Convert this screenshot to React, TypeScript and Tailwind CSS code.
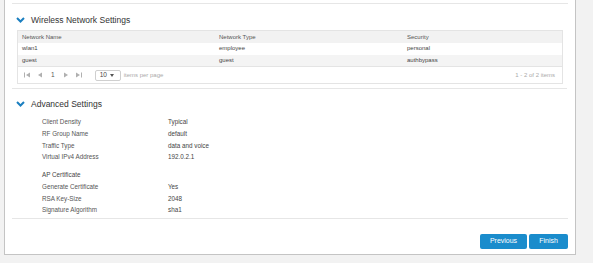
import React from 'react';

const networks = [
  { name: 'wlan1', type: 'employee', security: 'personal' },
  { name: 'guest', type: 'guest', security: 'authbypass' },
];

const advanced: [string, string][] = [
  ['Client Density', 'Typical'],
  ['RF Group Name', 'default'],
  ['Traffic Type', 'data and voice'],
  ['Virtual IPv4 Address', '192.0.2.1'],
];

const certificate: [string, string][] = [
  ['Generate Certificate', 'Yes'],
  ['RSA Key-Size', '2048'],
  ['Signature Algorithm', 'sha1'],
];

const Chevron = () => (
  <svg width="9" height="6" viewBox="0 0 9 6" className="shrink-0">
    <path d="M1 1 L4.5 4.5 L8 1" fill="none" stroke="#1b7fc0" strokeWidth="2" />
  </svg>
);

const SectionTitle = ({ title }: { title: string }) => (
  <div className="flex items-center gap-[6px] pl-[4px] h-[14px]">
    <Chevron />
    <span className="text-[8.5px] text-[#333]">{title}</span>
  </div>
);

const PagerIcon = ({ d }: { d: string }) => (
  <svg width="6" height="6" viewBox="0 0 6 6">
    <path d={d} fill="#b0b0b0" />
  </svg>
);

const Row = ({ label, value }: { label: string; value: string }) => (
  <div className="flex h-[11.7px] items-center">
    <span className="w-[126px] text-[#555]">{label}</span>
    <span className="text-[#444]">{value}</span>
  </div>
);

const App: React.FC = () => {
  return (
    <div
      className="w-[593px] h-[263px] bg-[#f2f2f2] flex overflow-hidden"
      style={{ fontFamily: '"Liberation Sans", Arial, sans-serif' }}
    >
      <div className="ml-[4px] w-[572px] h-[255px] bg-white border border-[#c4c4c4] border-t-0 flex flex-col px-[7px]">
        <div className="h-[4px] border-b border-[#e6e6e6]" />

        <div className="mt-[9px]">
          <SectionTitle title="Wireless Network Settings" />
        </div>

        <div className="mt-[3px] ml-[5px] mr-[5px] border border-[#e4e4e4] text-[6px]">
          <div className="grid grid-cols-[197px_188px_1fr] h-[12px] items-center bg-[#f2f2f2] text-[#555] pl-[4px]">
            <span>Network Name</span>
            <span>Network Type</span>
            <span>Security</span>
          </div>
          {networks.map((n, i) => (
            <div
              key={n.name}
              className={`grid grid-cols-[197px_188px_1fr] h-[11.5px] items-center text-[#444] pl-[4px] ${i % 2 === 1 ? 'bg-[#f4f4f4]' : 'bg-white'}`}
            >
              <span>{n.name}</span>
              <span>{n.type}</span>
              <span>{n.security}</span>
            </div>
          ))}
          <div className="flex items-center h-[17px] border-t border-[#e4e4e4] pl-[6px] pr-[7px] text-[#888]">
            <div className="flex items-center gap-[7px]">
              <PagerIcon d="M0 0.5h1v5H0z M6 0.5v5L2 3z" />
              <PagerIcon d="M5 0.5v5L1 3z" />
              <span className="text-[#555] text-[6.5px] px-[1px]">1</span>
              <PagerIcon d="M1 0.5v5L5 3z" />
              <PagerIcon d="M0 0.5v5L4 3z M5 0.5h1v5H5z" />
            </div>
            <div className="ml-[13px] flex items-center gap-[3px] border border-[#cfcfcf] rounded-[2px] h-[11px] w-[26px] pl-[4px]">
              <span className="text-[#444] text-[6.5px]">10</span>
              <svg width="4" height="3" viewBox="0 0 4 3">
                <path d="M0 0h4L2 3z" fill="#555" />
              </svg>
            </div>
            <span className="ml-[3px] text-[#aaa]">items per page</span>
            <span className="ml-auto text-[#aaa]">1 - 2 of 2 items</span>
          </div>
        </div>

        <div className="mt-[4px] mr-[1px] border-b border-[#e6e6e6]" />

        <div className="mt-[8px]">
          <SectionTitle title="Advanced Settings" />
        </div>

        <div className="mt-[5px] pl-[30px] text-[6.3px]">
          {advanced.map(([l, v]) => (
            <Row key={l} label={l} value={v} />
          ))}
          <div className="h-[18px] flex items-end pb-[1px] text-[#444]">AP Certificate</div>
          {certificate.map(([l, v]) => (
            <Row key={l} label={l} value={v} />
          ))}
        </div>

        <div className="mt-[2px] border-b border-[#e6e6e6]" />

        <div className="flex justify-end gap-[2px] mt-[15px]">
          <button className="w-[47px] h-[15px] bg-[#1a8ccc] text-white text-[7px] rounded-[2px]">
            Previous
          </button>
          <button className="w-[39px] h-[15px] bg-[#1a8ccc] text-white text-[7px] rounded-[2px]">
            Finish
          </button>
        </div>
      </div>
    </div>
  );
};

export default App;
